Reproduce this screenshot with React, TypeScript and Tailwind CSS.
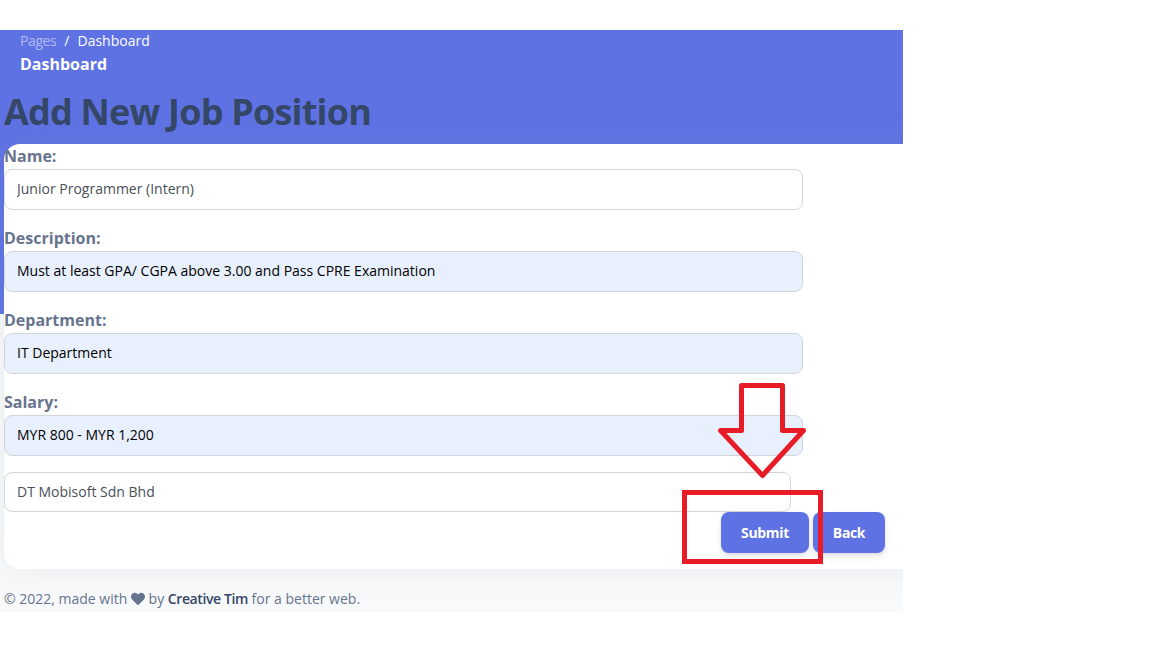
import React from "react";

type Field = { id: string; label: string; value: string; filled: boolean };

const fields: Field[] = [
  { id: "name", label: "Name:", value: "Junior Programmer (Intern)", filled: false },
  { id: "description", label: "Description:", value: "Must at least GPA/ CGPA above 3.00 and Pass CPRE Examination", filled: true },
  { id: "department", label: "Department:", value: "IT Department", filled: true },
  { id: "salary", label: "Salary:", value: "MYR 800 - MYR 1,200", filled: true },
];

const inputBase =
  "block rounded-lg border border-[#d2d6da] px-3 text-[14px] leading-5 outline-none";

function FormField({ field }: { field: Field }) {
  return (
    <div className="mb-4 h-[66px]">
      <label htmlFor={field.id} className="block h-[25px] text-[16px] leading-[25px] font-bold text-[#67748e]">
        {field.label}
      </label>
      <input
        id={field.id}
        defaultValue={field.value}
        className={`${inputBase} h-[41px] w-[799px] pb-0.5 ${field.filled ? "bg-[#e8f0fe] text-black" : "bg-white text-[#495057]"}`}
      />
    </div>
  );
}

const buttonBase =
  "h-[41px] rounded-lg bg-[#5e72e4] text-[14px] font-bold tracking-[-0.35px] text-white shadow-[0_4px_6px_rgba(50,50,93,0.1),0_1px_3px_rgba(0,0,0,0.08)]";

export default function App() {
  return (
    <div className="relative h-[648px] w-[1152px] overflow-hidden bg-white pt-[30px] font-['Open_Sans',sans-serif]">
      <main className="h-[582px] w-[903px] overflow-hidden bg-[linear-gradient(#5e72e4_284px,#f8f9fa_284px)]">
        <header className="h-[56px] pl-5 text-white">
          <nav className="flex h-[22px] items-center text-[14px] leading-[22px]">
            <span className="tracking-[-0.4px] opacity-50">Pages</span>
            <span className="px-2">/</span>
            <span>Dashboard</span>
          </nav>
          <h6 className="text-[16px] leading-6 font-bold">Dashboard</h6>
        </header>
        <h1 className="h-[58px] pl-1 text-[36px] leading-[52px] font-bold tracking-[-0.8px] whitespace-nowrap text-[#344767]">
          Add New Job Position
        </h1>
        <section className="ml-1 h-[425px] w-[940px] rounded-2xl bg-white shadow-[0_0_32px_rgba(136,152,170,0.15)]">
          <form onSubmit={(e) => e.preventDefault()}>
            {fields.map((field) => (
              <FormField key={field.id} field={field} />
            ))}
            <input
              aria-label="Company"
              defaultValue="DT Mobisoft Sdn Bhd"
              className={`${inputBase} h-10 w-[787px] bg-white pb-0.5 text-[#495057]`}
            />
            <div className="flex w-[881px] justify-end gap-1">
              <button type="submit" className={`${buttonBase} w-[88px]`}>Submit</button>
              <button type="button" className={`${buttonBase} w-[72px]`}>Back</button>
            </div>
          </form>
        </section>
        <footer className="relative flex h-[43px] items-center pt-4 pl-1 text-[14px] leading-5 whitespace-pre text-[#67748e]">
          <span>© 2022, made with </span>
          <svg viewBox="0 0 512 512" className="size-[14px]" fill="currentColor" aria-hidden="true">
            <path d="M462.3 62.6C407.5 15.9 326 24.3 275.7 76.2L256 96.5l-19.7-20.3C186.1 24.3 104.5 15.9 49.7 62.6c-62.8 53.6-66.1 149.8-9.9 207.9l193.5 199.8c12.5 12.9 32.8 12.9 45.3 0l193.5-199.8c56.3-58.1 53-154.3-9.8-207.9z" />
          </svg>
          <span> by </span>
          <a className="font-semibold tracking-[-0.4px] text-[#344767]">Creative Tim</a>
          <span> for a better web.</span>
        </footer>
      </main>
      <svg className="pointer-events-none absolute top-[376px] left-[676px]" width="156" height="192" viewBox="676 376 156 192" fill="none" stroke="#e81c27" strokeWidth="5" aria-hidden="true">
        <path d="M741.5 385.5H782.5V430.5H803.5L762.5 475.5L720.5 430.5H741.5Z" strokeLinejoin="round" />
        <rect x="684.5" y="492.5" width="136" height="69" />
      </svg>
    </div>
  );
}
